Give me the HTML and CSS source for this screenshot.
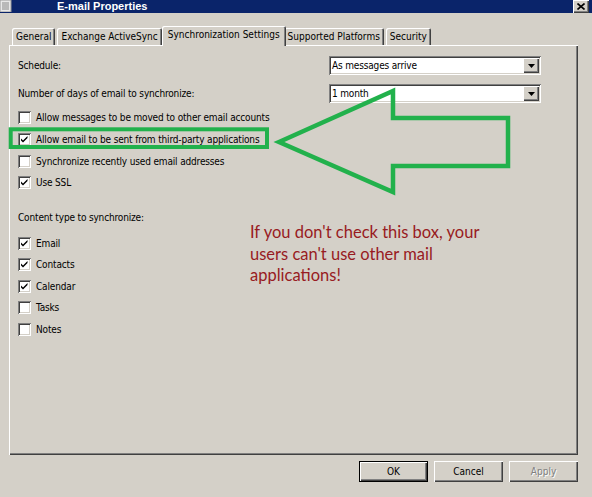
FILE: index.html
```html
<!DOCTYPE html>
<html>
<head>
<meta charset="utf-8">
<link rel="stylesheet" href="styles.css">
</head>
<body>
<div class="window">
  <div class="titlebar">
    <span class="app-icon">
      <svg width="12" height="12" viewBox="0 0 12 12"><rect x="0" y="0" width="11" height="12" fill="#e8e8e8" stroke="#9a9a9a"/><path d="M2 3h7M2 5h7M2 7h7M2 9h7" stroke="#8a8a8a" stroke-width="1"/></svg>
    </span>
    <span class="title">E-mail Properties</span>
    <span class="close"><svg width="8" height="7" viewBox="0 0 8 7"><path d="M0.5 0.5L7.5 6.5M7.5 0.5L0.5 6.5" stroke="#000" stroke-width="1.6"/></svg></span>
  </div>

  <div class="tabs">
    <div class="tab">General</div>
    <div class="tab">Exchange ActiveSync</div>
    <div class="tab active">Synchronization Settings</div>
    <div class="tab">Supported Platforms</div>
    <div class="tab">Security</div>
  </div>

  <div class="panel">
    <div class="field">
      <span class="label">Schedule:</span>
      <div class="combo"><span class="value">As messages arrive</span><span class="drop"><svg width="7" height="4" viewBox="0 0 7 4"><path d="M0 0h7L3.5 4z" fill="#000"/></svg></span></div>
    </div>
    <div class="field">
      <span class="label">Number of days of email to synchronize:</span>
      <div class="combo"><span class="value">1 month</span><span class="drop"><svg width="7" height="4" viewBox="0 0 7 4"><path d="M0 0h7L3.5 4z" fill="#000"/></svg></span></div>
    </div>

    <ul class="checks first">
      <li><span class="box"></span>Allow messages to be moved to other email accounts</li>
      <li><span class="box checked"></span>Allow email to be sent from third-party applications</li>
      <li><span class="box"></span>Synchronize recently used email addresses</li>
      <li><span class="box checked"></span>Use SSL</li>
    </ul>

    <div class="section-label">Content type to synchronize:</div>

    <ul class="checks second">
      <li><span class="box checked"></span>Email</li>
      <li><span class="box checked"></span>Contacts</li>
      <li><span class="box checked"></span>Calendar</li>
      <li><span class="box"></span>Tasks</li>
      <li><span class="box"></span>Notes</li>
    </ul>
  </div>

  <div class="buttons">
    <button class="btn default">OK</button>
    <button class="btn">Cancel</button>
    <button class="btn disabled">Apply</button>
  </div>

  <svg class="annotation" width="592" height="497" viewBox="0 0 592 497">
    <rect x="10.7" y="129.3" width="256.3" height="17.7" fill="none" stroke="#22b14c" stroke-width="4"/>
    <polygon points="279,142 393,91 393,118 508,118 508,166 393,166 393,192" fill="none" stroke="#22b14c" stroke-width="4.5" stroke-linejoin="miter"/>
  </svg>

  <p class="note">If you don't check this box, your<br>users can't use other mail<br>applications!</p>
</div>
</body>
</html>
```

FILE: styles.css
```css
* { box-sizing: border-box; }

body {
  margin: 0;
  background: #d4d0c8;
  font: 10px "DejaVu Sans Condensed", "Liberation Sans", Arial, sans-serif;
  color: #000;
}

.window {
  position: relative;
  width: 592px;
  height: 497px;
  overflow: hidden;
  background: #d4d0c8;
}

/* Title bar */
.titlebar {
  height: 13px;
  background: #0a246a;
  display: flex;
  align-items: center;
}

.app-icon {
  width: 12px;
  height: 12px;
  display: flex;
  align-self: flex-start;
}

.title {
  margin-left: 45px;
  color: #fff;
  font: bold 11px "Liberation Sans", Arial, sans-serif;
  line-height: 13px;
}

.close {
  margin-left: auto;
  margin-right: 3px;
  width: 16px;
  height: 13px;
  background: #d4d0c8;
  box-shadow: inset 1px 1px 0 #fff, inset -1px -1px 0 #404040, inset -2px -2px 0 #808080;
  display: flex;
  align-items: center;
  justify-content: center;
}

/* Tabs */
.tabs {
  display: flex;
  align-items: flex-end;
  margin-top: 13px;
  padding-left: 12px;
  height: 19px;
  position: relative;
  z-index: 2;
}

.tab {
  height: 17px;
  padding: 0 4px;
  margin-right: 2px;
  line-height: 17px;
  white-space: nowrap;
  border-radius: 2px 2px 0 0;
  background: #d4d0c8;
  box-shadow: inset 1px 1px 0 #fff, inset -1px 0 0 #404040, inset -2px 0 0 #808080;
}

.tab.active {
  height: 20px;
  margin: 0 0 -1px -2px;
  padding: 0 6px;
  line-height: 18px;
  position: relative;
}

.tab.active + .tab { margin-left: -2px; }

/* Panel */
.panel {
  margin-left: 9px;
  width: 569px;
  height: 410px;
  padding: 11px 37px 0 9px;
  letter-spacing: -0.16px;
  box-shadow: inset 1px 1px 0 #fff, inset -1px -1px 0 #404040, inset -2px -2px 0 #808080;
  position: relative;
  z-index: 1;
}

.field {
  display: grid;
  grid-template-columns: 1fr 212px;
  align-items: center;
  height: 19px;
}

.field + .field { margin-top: 9px; }

.combo {
  height: 19px;
  background: #fff;
  display: flex;
  align-items: center;
  padding: 2px;
  box-shadow: inset 1px 1px 0 #808080, inset -1px -1px 0 #fff, inset 2px 2px 0 #404040, inset -2px -2px 0 #d4d0c8;
}

.combo .value {
  flex: 1;
  padding-left: 1px;
  line-height: 15px;
}

.drop {
  width: 16px;
  height: 15px;
  background: #d4d0c8;
  box-shadow: inset 1px 1px 0 #fff, inset -1px -1px 0 #404040, inset -2px -2px 0 #808080;
  display: flex;
  align-items: center;
  justify-content: center;
}

.checks {
  list-style: none;
  margin: 0;
  padding: 0;
}

.checks.first { margin-top: 4px; }

.checks li {
  height: 21.7px;
  display: flex;
  align-items: center;
  white-space: nowrap;
}

.box {
  width: 13px;
  height: 13px;
  margin-right: 5px;
  background: #fff;
  box-shadow: inset 1px 1px 0 #808080, inset -1px -1px 0 #fff, inset 2px 2px 0 #404040, inset -2px -2px 0 #d4d0c8;
  flex: none;
}

.box.checked {
  background: #fff url("data:image/svg+xml;utf8,<svg xmlns='http://www.w3.org/2000/svg' width='13' height='13'><path d='M3 5.5l2 2 4.5-4.5v2L5 9.5l-2-2z' fill='black'/></svg>") no-repeat;
}

.section-label {
  margin-top: 13px;
  height: 21px;
  line-height: 21px;
}

.checks.second { margin-top: 4.5px; }
.checks.second li { height: 21.5px; }

/* Buttons */
.buttons {
  display: flex;
  justify-content: flex-end;
  gap: 6px;
  margin-top: 6px;
  padding-right: 14px;
}

.btn {
  width: 69px;
  height: 21px;
  font: 10px "DejaVu Sans Condensed", "Liberation Sans", Arial, sans-serif;
  background: #d4d0c8;
  border: none;
  padding: 0;
  color: #000;
  box-shadow: inset 1px 1px 0 #fff, inset -1px -1px 0 #404040, inset -2px -2px 0 #808080;
}

.btn.default {
  box-shadow: inset 0 0 0 1px #000, inset 2px 2px 0 #fff, inset -2px -2px 0 #404040, inset -3px -3px 0 #808080;
}

.btn.disabled {
  color: #808080;
  text-shadow: 1px 1px 0 #fff;
}

/* Annotations */
.annotation {
  position: absolute;
  left: 0;
  top: 0;
  z-index: 5;
  pointer-events: none;
}

.note {
  position: absolute;
  left: 250px;
  top: 222px;
  margin: 0;
  z-index: 5;
  font: 16.5px Lato, "Open Sans", sans-serif;
  line-height: 21.5px;
  color: #981b22;
}
```
